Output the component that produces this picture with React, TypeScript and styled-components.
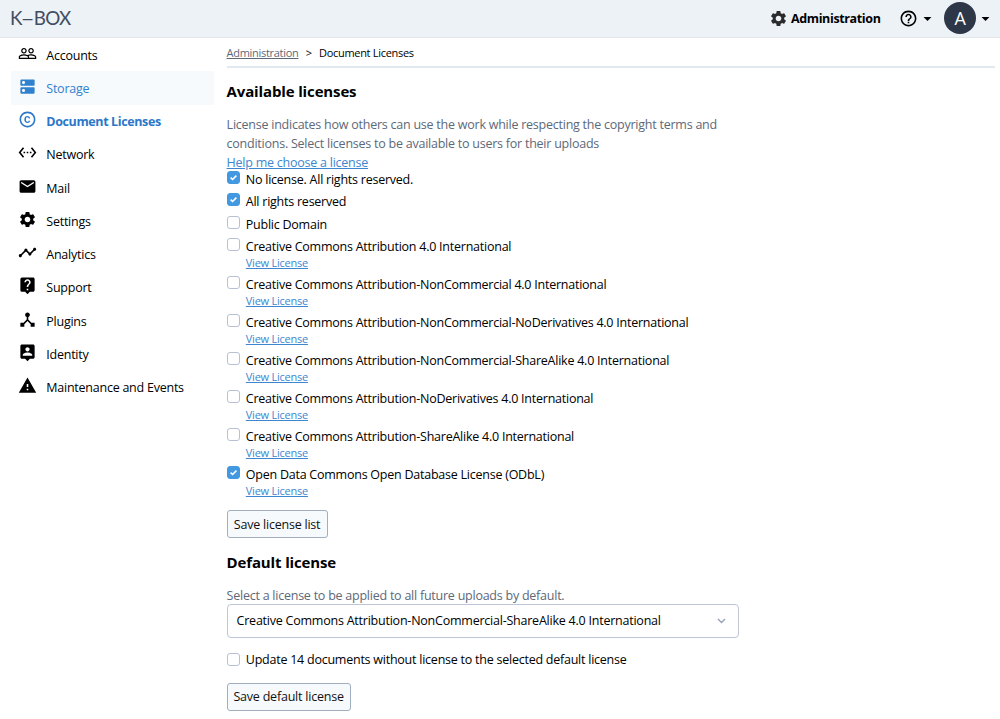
import React from "react";
import styled, { createGlobalStyle, css } from "styled-components";
import {
  MdPeopleOutline,
  MdDns,
  MdCopyright,
  MdSettingsEthernet,
  MdMail,
  MdSettings,
  MdTimeline,
  MdLiveHelp,
  MdDeviceHub,
  MdWarning,
  MdHelpOutline,
  MdArrowDropDown,
} from "react-icons/md";

const GlobalStyle = createGlobalStyle`
  *, *::before, *::after { box-sizing: border-box; }
  body {
    margin: 0;
    background: #fff;
    color: #000;
    font-family: "Open Sans", "Noto Sans", sans-serif;
    font-size: 12.5px;
    letter-spacing: -0.24px;
    overflow: hidden;
  }
`;

const Page = styled.div`
  height: 719px;
  display: flex;
  flex-direction: column;
`;

const Header = styled.header`
  height: 38px;
  flex: none;
  display: flex;
  align-items: center;
  justify-content: space-between;
  padding: 0 5px 1px 10px;
  background: #edf2f7;
  border-bottom: 1px solid #e2e5e9;
`;

const Logo = styled.div`
  font-family: Lato, sans-serif;
  font-size: 18.8px;
  line-height: 24px;
  letter-spacing: -0.6px;
  color: #434d61;
  white-space: nowrap;
`;

const LogoDash = styled.span`
  display: inline-block;
  margin: 0 1px 0 0.5px;
  transform: scaleX(1.3);
`;

const HeaderActions = styled.div`
  display: flex;
  align-items: center;
  height: 36px;
`;

const AdminLink = styled.div`
  display: flex;
  align-items: center;
  gap: 3px;
  font-weight: 700;
  letter-spacing: -0.37px;
  white-space: nowrap;
  margin-right: 18.5px;
  svg { color: #2b2b2b; }
`;

const Caret = styled(MdArrowDropDown)`
  flex: none;
`;

const Avatar = styled.div`
  width: 32px;
  height: 32px;
  margin: 0 0 0 7px;
  border-radius: 50%;
  background: #2d3748;
  color: #fff;
  font-size: 18px;
  display: flex;
  align-items: center;
  justify-content: center;
`;

const Body = styled.div`
  flex: 1;
  display: flex;
`;

const Sidebar = styled.nav`
  width: 226.6px;
  flex: none;
  padding: 0 12.8px 0 10.8px;
`;

const NavItem = styled.a<{ $tone?: "hover" | "active" }>`
  display: flex;
  align-items: center;
  height: 33.25px;
  padding-left: 6.8px;
  gap: 9.7px;
  white-space: nowrap;
  svg { flex: none; margin-top: -3px; }
  span { padding-top: 1px; }
  ${(p) => p.$tone === "hover" && css`color: #3182ce; background: #f7fafc;`}
  ${(p) => p.$tone === "active" && css`color: #2b77c9; font-weight: 700; letter-spacing: -0.38px;`}
`;

const Main = styled.main`
  flex: 1;
  display: flex;
  flex-direction: column;
  align-items: flex-start;
  padding-right: 5px;
`;

const Breadcrumb = styled.div`
  width: 100%;
  height: 30px;
  border-bottom: 2px solid #e2e8f0;
  display: flex;
  align-items: center;
  gap: 7.3px;
  font-size: 11px;
  letter-spacing: -0.3px;
`;

const Crumb = styled.a`
  color: #5d6878;
  text-decoration: underline;
`;

const Title = styled.h2<{ $top: number }>`
  margin: ${(p) => p.$top}px 0 0;
  font-size: 15px;
  line-height: 22px;
  font-weight: 700;
  letter-spacing: -0.14px;
`;

const Hint = styled.p<{ $top: number }>`
  margin: ${(p) => p.$top}px 0 0;
  color: #5d6878;
  line-height: 19px;
  white-space: nowrap;
`;

const Link = styled.a<{ $small?: boolean }>`
  color: #3d86d0;
  text-decoration: underline;
  font-size: ${(p) => (p.$small ? "11px" : "12.5px")};
  line-height: ${(p) => (p.$small ? 15.4 : 19)}px;
`;

const Options = styled.div`
  display: flex;
  flex-direction: column;
  margin-top: -1px;
`;

const Option = styled.label`
  display: flex;
  align-items: flex-start;
  gap: 6.2px;
`;

const OptionText = styled.div`
  display: flex;
  flex-direction: column;
  white-space: nowrap;
`;

const OptionName = styled.span`
  line-height: 17px;
  padding-bottom: 5.3px;
  &:not(:last-child) { padding-bottom: 0; }
`;

const ViewLink = styled(Link)`
  padding-bottom: 5.65px;
`;

const Box = styled.span<{ $checked?: boolean }>`
  flex: none;
  width: 13px;
  height: 13px;
  border-radius: 3px;
  border: 1px solid ${(p) => (p.$checked ? "#4299e1" : "#b6c1d2")};
  background: ${(p) => (p.$checked ? "#4299e1" : "#fff")};
  display: flex;
  align-items: center;
  justify-content: center;
`;

const Button = styled.button<{ $width: number; $top: number }>`
  margin: ${(p) => p.$top}px 0 0;
  width: ${(p) => p.$width}px;
  height: 28px;
  padding: 0;
  border: 1px solid #a0aec0;
  border-radius: 3px;
  background: #f7fafc;
  color: #111;
  font: inherit;
  letter-spacing: -0.22px;
  white-space: nowrap;
`;

const Select = styled.div`
  width: 512px;
  height: 34px;
  margin-top: -0.7px;
  border: 1px solid #bcc6d6;
  border-radius: 4px;
  padding: 0 12px 0 9px;
  letter-spacing: -0.23px;
  display: flex;
  align-items: center;
  justify-content: space-between;
`;

const UpdateRow = styled(Option)`
  margin-top: 13px;
  height: 18px;
  align-items: center;
  white-space: nowrap;
`;

function IdentityIcon({ size = 24 }: { size?: number }) {
  return (
    <svg width={size} height={size} viewBox="0 0 24 24" fill="currentColor">
      <path d="M19 2H5c-1.11 0-2 .9-2 2v14c0 1.1.89 2 2 2h4l3 3 3-3h4c1.1 0 2-.9 2-2V4c0-1.1-.9-2-2-2zm-7 3.3c1.49 0 2.7 1.21 2.7 2.7s-1.21 2.7-2.7 2.7S9.3 9.49 9.3 8s1.21-2.7 2.7-2.7zM18 16H6v-.9c0-2 4-3.1 6-3.1s6 1.1 6 3.1v.9z" />
    </svg>
  );
}

const nav: { label: string; Icon: React.ComponentType<{ size?: number }>; tone?: "hover" | "active" }[] = [
  { label: "Accounts", Icon: MdPeopleOutline },
  { label: "Storage", Icon: MdDns, tone: "hover" },
  { label: "Document Licenses", Icon: MdCopyright, tone: "active" },
  { label: "Network", Icon: MdSettingsEthernet },
  { label: "Mail", Icon: MdMail },
  { label: "Settings", Icon: MdSettings },
  { label: "Analytics", Icon: MdTimeline },
  { label: "Support", Icon: MdLiveHelp },
  { label: "Plugins", Icon: MdDeviceHub },
  { label: "Identity", Icon: IdentityIcon },
  { label: "Maintenance and Events", Icon: MdWarning },
];

const licenses: { name: string; checked?: boolean; link?: boolean }[] = [
  { name: "No license. All rights reserved.", checked: true },
  { name: "All rights reserved", checked: true },
  { name: "Public Domain" },
  { name: "Creative Commons Attribution 4.0 International", link: true },
  { name: "Creative Commons Attribution-NonCommercial 4.0 International", link: true },
  { name: "Creative Commons Attribution-NonCommercial-NoDerivatives 4.0 International", link: true },
  { name: "Creative Commons Attribution-NonCommercial-ShareAlike 4.0 International", link: true },
  { name: "Creative Commons Attribution-NoDerivatives 4.0 International", link: true },
  { name: "Creative Commons Attribution-ShareAlike 4.0 International", link: true },
  { name: "Open Data Commons Open Database License (ODbL)", checked: true, link: true },
];

function Checkbox({ checked }: { checked?: boolean }) {
  return (
    <Box $checked={checked}>
      {checked && (
        <svg width="9" height="9" viewBox="0 0 9 9" fill="none" stroke="#fff" strokeWidth="1.6">
          <path d="M1.6 4.6 3.6 6.5 7.4 2.6" />
        </svg>
      )}
    </Box>
  );
}

export default function App() {
  return (
    <Page>
      <GlobalStyle />
      <Header>
        <Logo>
          K<LogoDash>–</LogoDash>BOX
        </Logo>
        <HeaderActions>
          <AdminLink>
            <MdSettings size={19} />
            <span>Administration</span>
          </AdminLink>
          <MdHelpOutline size={19} />
          <Caret size={19} />
          <Avatar>A</Avatar>
          <Caret size={19} />
        </HeaderActions>
      </Header>
      <Body>
        <Sidebar>
          {nav.map(({ label, Icon, tone }) => (
            <NavItem key={label} $tone={tone}>
              <Icon size={19} />
              <span>{label}</span>
            </NavItem>
          ))}
        </Sidebar>
        <Main>
          <Breadcrumb>
            <Crumb>Administration</Crumb>
            <span>&gt;</span>
            <span>Document Licenses</span>
          </Breadcrumb>
          <Title $top={12}>Available licenses</Title>
          <Hint $top={13}>
            License indicates how others can use the work while respecting the copyright terms and
            <br />
            conditions. Select licenses to be available to users for their uploads
          </Hint>
          <Link>Help me choose a license</Link>
          <Options>
            {licenses.map((l) => (
              <Option key={l.name}>
                <Checkbox checked={l.checked} />
                <OptionText>
                  <OptionName>{l.name}</OptionName>
                  {l.link && <ViewLink $small>View License</ViewLink>}
                </OptionText>
              </Option>
            ))}
          </Options>
          <Button $width={101} $top={6}>Save license list</Button>
          <Title $top={13}>Default license</Title>
          <Hint $top={12.3}>Select a license to be applied to all future uploads by default.</Hint>
          <Select>
            <span>Creative Commons Attribution-NonCommercial-ShareAlike 4.0 International</span>
            <svg width="9" height="6" viewBox="0 0 9 6" fill="none" stroke="#94a1b5" strokeWidth="1.4">
              <path d="M1 1 4.5 4.4 8 1" />
            </svg>
          </Select>
          <UpdateRow>
            <Checkbox />
            <span>Update 14 documents without license to the selected default license</span>
          </UpdateRow>
          <Button $width={124} $top={14}>Save default license</Button>
        </Main>
      </Body>
    </Page>
  );
}
